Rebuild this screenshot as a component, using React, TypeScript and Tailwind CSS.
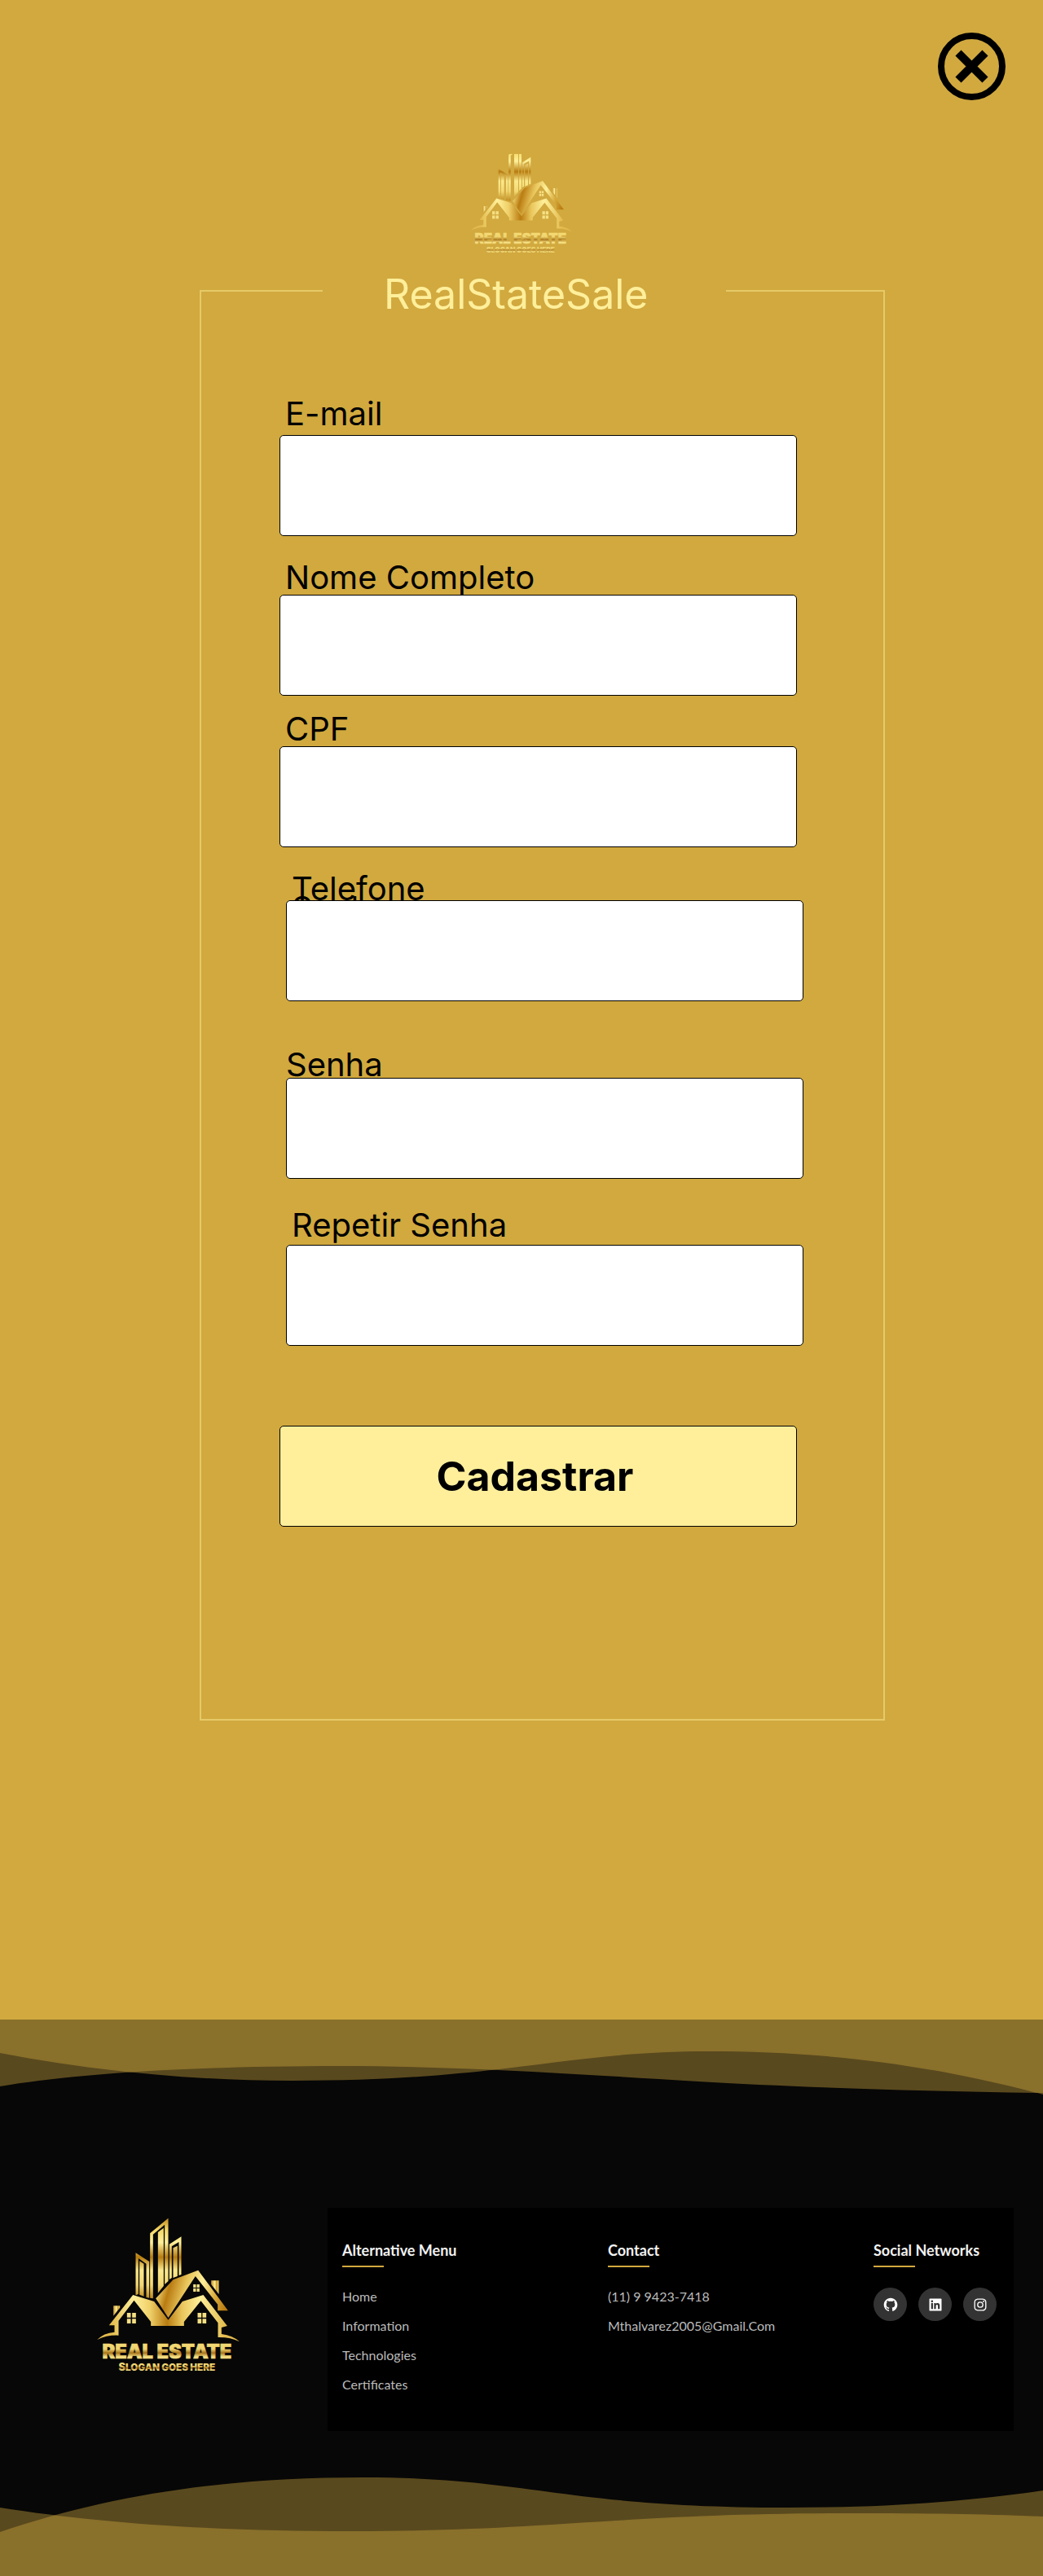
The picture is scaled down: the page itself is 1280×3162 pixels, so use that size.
import { useId } from "react";
import { BiLogoGithub, BiLogoInstagram, BiLogoLinkedinSquare } from "react-icons/bi";

function Logo({ className, viewBox }: { className: string; viewBox: string }) {
  const id = useId().replace(/[^a-zA-Z0-9]/g, "");
  const tower = `url(#${id}t)`;
  const roof = `url(#${id}r)`;
  const word = `url(#${id}w)`;
  const chimney = `url(#${id}c)`;
  return (
    <svg className={className} viewBox={viewBox} role="img" aria-label="Real Estate">
      <defs>
        <linearGradient id={`${id}t`} gradientUnits="userSpaceOnUse" x1="0" y1="70" x2="0" y2="370">
          <stop offset="0" stopColor="#c08a1c" />
          <stop offset="0.14" stopColor="#f3d766" />
          <stop offset="0.3" stopColor="#fff09a" />
          <stop offset="0.48" stopColor="#b77c10" />
          <stop offset="0.64" stopColor="#fbe98c" />
          <stop offset="0.82" stopColor="#f3d873" />
          <stop offset="1" stopColor="#b98318" />
        </linearGradient>
        <linearGradient id={`${id}r`} gradientUnits="userSpaceOnUse" x1="110" y1="0" x2="530" y2="0">
          <stop offset="0" stopColor="#e3bb4e" />
          <stop offset="0.2" stopColor="#fff09a" />
          <stop offset="0.34" stopColor="#f0d069" />
          <stop offset="0.49" stopColor="#b97c12" />
          <stop offset="0.62" stopColor="#e9c65c" />
          <stop offset="0.78" stopColor="#fff09a" />
          <stop offset="1" stopColor="#e3bb4e" />
        </linearGradient>
        <linearGradient id={`${id}b`} gradientUnits="userSpaceOnUse" x1="280" y1="330" x2="530" y2="400">
          <stop offset="0" stopColor="#f3d873" />
          <stop offset="0.16" stopColor="#b97c12" />
          <stop offset="0.38" stopColor="#e9c65c" />
          <stop offset="0.6" stopColor="#fff09a" />
          <stop offset="0.82" stopColor="#d9ab3c" />
          <stop offset="1" stopColor="#b97c12" />
        </linearGradient>
        <linearGradient id={`${id}c`} x1="0" x2="1" y1="0" y2="0">
          <stop offset="0" stopColor="#c9962a" />
          <stop offset="0.5" stopColor="#fff09a" />
          <stop offset="0.7" stopColor="#c9962a" />
          <stop offset="1" stopColor="#f3d873" />
        </linearGradient>
        <linearGradient id={`${id}w`} x1="0" x2="0" y1="0.2" y2="0.85">
          <stop offset="0" stopColor="#f3d873" />
          <stop offset="0.3" stopColor="#efd470" />
          <stop offset="0.55" stopColor="#a8741a" />
          <stop offset="0.8" stopColor="#f6e084" />
          <stop offset="1" stopColor="#e9cf6a" />
        </linearGradient>
      </defs>
      <g fill={tower}>
        <path d="M200 198 L250 230 V364 L239 362 V238 L210 218 V350 L200 354 Z" />
        <path d="M214 228 L230 238 V358 L214 352 Z" />
        <path d="M253 126 L320 70 V302 L307 314 V94 L264 130 V366 L253 364 Z" />
        <path d="M282 122 L303 106 V320 L282 346 Z" />
        <path d="M324 166 L368 138 V278 L359 281 V158 L333 174 V290 L324 296 Z" />
        <path d="M338 180 L354 172 V284 L338 290 Z" />
      </g>
      <g fill={chimney}>
        <path d="M118 393 H142 V400 L118 430 Z" />
        <path d="M478 300 H506 V350 L478 314 Z" />
      </g>
      <path
        fill={`url(#${id}b)`}
        d="M274 366 L338 297 L430 262 L540 411 H502 V388 L420 284 L320 437 Z"
      />
      <path
        fill={roof}
        d="M190 353 L268 377 L320 445 L372 377 L449 353 L537 467 L516 473 V497 Q558 502 582 525 Q548 508 503 509 V456 L440 375 L378 452 V467 H256 V452 L194 373 L137 448 V502 Q96 500 58 518 Q82 493 122 490 V465 H102 Z"
      />
      <g fill="#f6e084">
        <path d="M412 314h10v12h-10zM425 314h10v12h-10zM412 329h10v12h-10zM425 329h10v12h-10z" />
        <path d="M168 419h14v17h-14zM187 419h14v17h-14zM168 441h14v17h-14zM187 441h14v17h-14z" />
        <path d="M428 419h14v17h-14zM446 419h14v17h-14zM428 441h14v17h-14zM446 441h14v17h-14z" />
      </g>
      <text
        x="315"
        y="587"
        textAnchor="middle"
        fill={word}
        stroke={word}
        strokeWidth="2"
        className="font-['Inter'] text-[71px] font-black"
      >
        REAL ESTATE
      </text>
      <text
        x="315"
        y="633"
        textAnchor="middle"
        fill={word}
        className="font-['Inter'] text-[38px] font-black"
      >
        S<tspan className="text-[35px]">LOGAN GOES HERE</tspan>
      </text>
    </svg>
  );
}

type FieldProps = {
  id: string;
  label: string;
  type?: string;
  className: string;
  labelClass: string;
  ghost?: string;
};

function Field({ id, label, type = "text", className, labelClass, ghost }: FieldProps) {
  return (
    <div className={`relative flex flex-col ${className}`}>
      <label htmlFor={id} className={`text-[40px] leading-[40px] text-black ${labelClass}`}>
        {label}
      </label>
      {ghost && (
        <span aria-hidden="true" className="absolute top-6 left-[7px] text-[40px] leading-[40px] text-black">
          {ghost}
        </span>
      )}
      <input
        id={id}
        type={type}
        className="relative h-[124px] w-full rounded-[5px] border border-black bg-white px-6 text-[32px] text-black"
      />
    </div>
  );
}

function FooterColumn({ title, children }: { title: string; children: React.ReactNode }) {
  return (
    <section>
      <h2 className="text-[18px] leading-6 font-bold whitespace-nowrap text-[#f2f2f2]">{title}</h2>
      <div className="mt-[7px] h-[2px] w-[51px] bg-[#d1a93f]" />
      {children}
    </section>
  );
}

function LinkList({ items }: { items: { text: string; href: string }[] }) {
  return (
    <ul className="mt-[26px] flex flex-col gap-4">
      {items.map((item) => (
        <li key={item.text} className="text-[16px] leading-[20px] text-[#bbbbbb]">
          <a href={item.href}>{item.text}</a>
        </li>
      ))}
    </ul>
  );
}

const menu = [
  { text: "Home", href: "#home" },
  { text: "Information", href: "#information" },
  { text: "Technologies", href: "#technologies" },
  { text: "Certificates", href: "#certificates" },
];

const contact = [
  { text: "(11) 9 9423-7418", href: "tel:+5511994237418" },
  { text: "Mthalvarez2005@Gmail.Com", href: "mailto:mthalvarez2005@gmail.com" },
];

const social = [
  { name: "GitHub", Icon: BiLogoGithub },
  { name: "LinkedIn", Icon: BiLogoLinkedinSquare },
  { name: "Instagram", Icon: BiLogoInstagram },
];

export default function App() {
  return (
    <div className="bg-[#d1a93f] font-['Inter',sans-serif]">
      <header className="flex flex-col">
        <div className="flex justify-end pt-10 pr-[46px]">
          <button type="button" aria-label="Fechar" className="size-[83px]">
            <svg viewBox="0 0 83 83" className="size-full" fill="none" stroke="#000">
              <circle cx="41.5" cy="41.5" r="37.5" strokeWidth="8" />
              <path d="M25 25 L58 58 M58 25 L25 58" strokeWidth="10" />
            </svg>
          </button>
        </div>
        <Logo className="mx-auto mt-[66px] h-[122px] w-[124px]" viewBox="58 122 524 516" />
      </header>

      <main className="pt-3 pb-[367px]">
        <form className="mr-[194px] ml-[245px]">
          <fieldset className="border-2 border-[#e6ca68] pr-[106px] pb-[236px] pl-24">
            <legend className="ml-[53px] w-[495px] pt-2 pl-[75px] text-[50px] leading-[60px] text-[#ffef9b]">
              RealStateSale
            </legend>
            <div className="flex flex-col pt-[97px]">
              <Field id="email" label="E-mail" type="email" className="" labelClass="mb-1.5 pl-[7px]" />
              <Field id="nome" label="Nome Completo" className="mt-[31px]" labelClass="mb-px pl-[7px]" />
              <Field id="cpf" label="CPF" className="mt-[21px]" labelClass="mb-px pl-[7px]" />
              <Field
                id="telefone"
                label="Telefone"
                type="tel"
                ghost="Senha"
                className="mt-[31px] -mr-2 ml-2"
                labelClass="-mb-1.5 pl-[7px]"
              />
              <Field id="senha" label="Senha" type="password" className="mt-[58px] -mr-2 ml-2" labelClass="-mb-1" />
              <Field
                id="repetir"
                label="Repetir Senha"
                type="password"
                className="mt-[37px] -mr-2 ml-2"
                labelClass="mb-1 pl-[7px]"
              />
              <button
                type="submit"
                className="mt-[98px] h-[124px] rounded-[5px] border border-black bg-[#ffef9b] pr-2 text-[50px] font-bold text-black"
              >
                Cadastrar
              </button>
            </div>
          </fieldset>
        </form>
      </main>

      <footer className="bg-[#070707] font-['Lato',sans-serif]">
        <svg
          viewBox="0 0 1280 98"
          preserveAspectRatio="none"
          className="block h-[98px] w-full"
          fill="#d1a93f"
          fillOpacity="0.406"
          aria-hidden="true"
        >
          <path d="M0 0 H1280 V92 C1130 52 1000 39 869 39 C690 39 620 75 359 75 C230 75 110 62 0 41 Z" />
          <path d="M0 0 H1280 V90 C1110 88 960 82 857 76 C690 66 560 57 416 57 C250 57 100 65 0 82 Z" />
        </svg>

        <div className="mt-[133px] flex">
          <div className="w-[402px] shrink-0 pt-3 pl-[119px]">
            <Logo className="h-[190px] w-[175px]" viewBox="58 68 524 570" />
          </div>
          <div className="mr-9 grid min-h-[274px] flex-1 grid-cols-[326fr_326fr_172fr] bg-black pt-10 pl-[18px]">
            <FooterColumn title="Alternative Menu">
              <LinkList items={menu} />
            </FooterColumn>
            <FooterColumn title="Contact">
              <LinkList items={contact} />
            </FooterColumn>
            <FooterColumn title="Social Networks">
              <ul className="mt-[25px] flex gap-3.5">
                {social.map(({ name, Icon }) => (
                  <li key={name}>
                    <a
                      href={`#${name.toLowerCase()}`}
                      aria-label={name}
                      className="flex size-[41px] items-center justify-center rounded-full bg-[#333333] text-white"
                    >
                      <Icon className="size-5" />
                    </a>
                  </li>
                ))}
              </ul>
            </FooterColumn>
          </div>
        </div>

        <svg
          viewBox="0 0 1280 126"
          preserveAspectRatio="none"
          className="mt-[52px] block h-[126px] w-full"
          fill="#d1a93f"
          fillOpacity="0.406"
          aria-hidden="true"
        >
          <path d="M0 126 V72 C130 28 270 5 445 5 C650 5 690 42 967 42 C1090 42 1190 34 1280 21 V126 Z" />
          <path d="M0 126 V42 C120 61 260 71 433 71 C680 71 760 49 1045 49 C1140 49 1210 50 1280 53 V126 Z" />
        </svg>
      </footer>
    </div>
  );
}
